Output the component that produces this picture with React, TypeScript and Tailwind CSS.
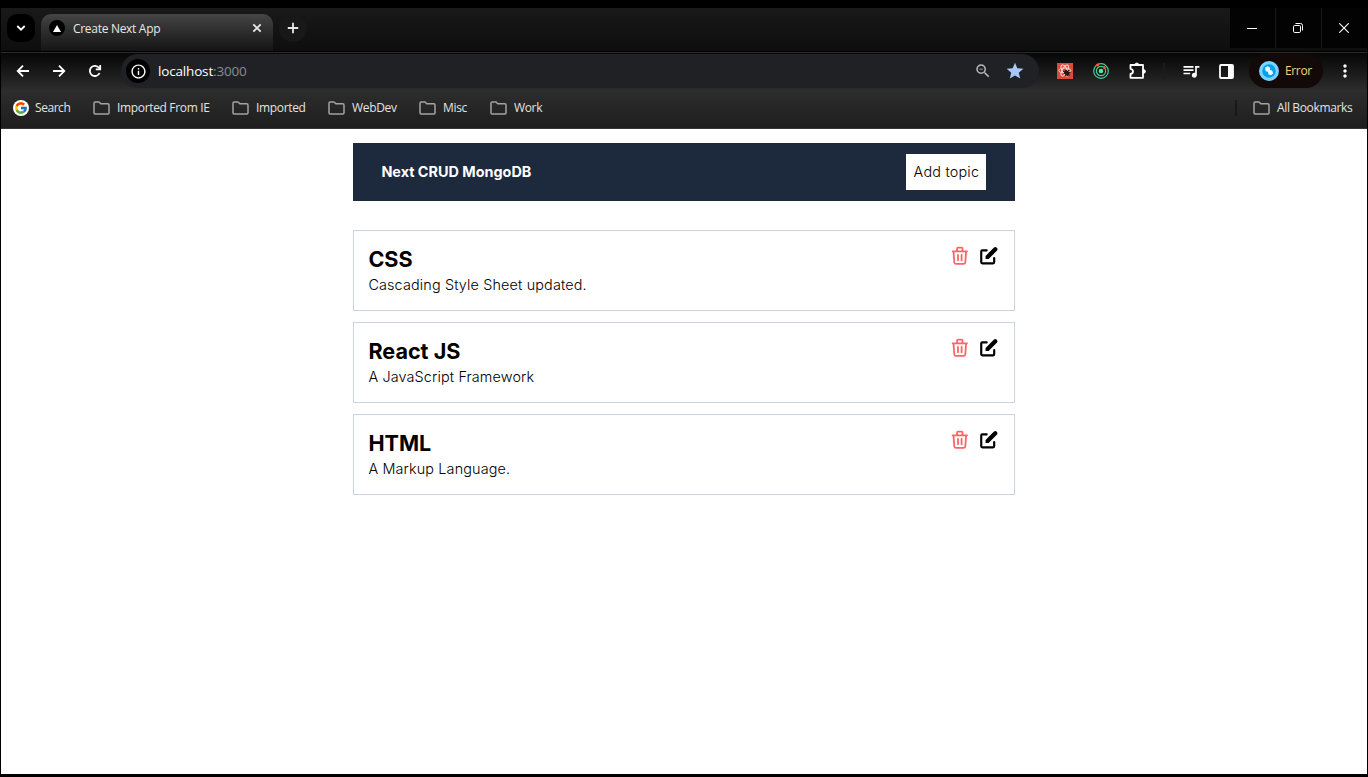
import React from "react";
import { HiPencilAlt, HiOutlineTrash } from "react-icons/hi";
import {
  MdOutlineInfo,
  MdStar,
  MdMoreVert,
  MdQueueMusic,
  MdZoomOut,
} from "react-icons/md";
import { FcGoogle } from "react-icons/fc";

const topics = [
  { title: "CSS", description: "Cascading Style Sheet updated." },
  { title: "React JS", description: "A JavaScript Framework" },
  { title: "HTML", description: "A Markup Language." },
];

const bookmarks = [
  { label: "Imported From IE", box: "ml-[22px] w-[117px]" },
  { label: "Imported", box: "ml-[22px] w-[74px]" },
  { label: "WebDev", box: "ml-[22px] w-[70px]" },
  { label: "Misc", box: "ml-[21px] w-[49px]" },
  { label: "Work", box: "ml-[22px] w-[53px]" },
];

function Folder() {
  return (
    <svg width="17" height="14" viewBox="0 0 17 14" fill="none" className="shrink-0">
      <path
        d="M1 2.2Q1 1 2.2 1H6L7.8 2.8H14.8Q16 2.8 16 4V11.8Q16 13 14.8 13H2.2Q1 13 1 11.8Z"
        stroke="#a3a3a3"
        strokeWidth="1.5"
      />
    </svg>
  );
}

function StrokeIcon({ d, className = "" }: { d: string; className?: string }) {
  return (
    <svg
      width="16"
      height="16"
      viewBox="0 0 16 16"
      fill="none"
      stroke="currentColor"
      strokeWidth="1.8"
      className={"shrink-0 " + className}
    >
      <path d={d} />
    </svg>
  );
}

function TabStrip() {
  return (
    <div className="flex h-[43px] shrink-0 bg-linear-to-b from-[#191919] to-[#0e0e0e]">
      <div className="ml-[6px] mt-[6px] flex size-7 items-center justify-center rounded-[10px] bg-black text-white">
        <StrokeIcon d="M4.3 6L8 9.7L11.7 6" />
      </div>
      <div className="ml-[6px] mt-[6px] flex h-[37px] w-[232px] items-start rounded-t-[10px] bg-linear-to-b from-[#454545] to-[#151515] pl-2 pr-2 pt-[6px]">
        <div className="flex size-4 items-center justify-center rounded-full bg-black">
          <svg width="8" height="7" viewBox="0 0 8 7">
            <path d="M4 0L8 7H0Z" fill="#fff" />
          </svg>
        </div>
        <span className="ml-2 mt-px whitespace-nowrap text-[12px] leading-4 tracking-[-0.3px] text-[#e8e8e8]">
          Create Next App
        </span>
        <StrokeIcon d="M4.3 4.3L11.7 11.7M11.7 4.3L4.3 11.7" className="ml-auto text-[#e8e8e8]" />
      </div>
      <div className="ml-[6px] mt-[6px] flex size-7 items-center justify-center rounded-full bg-[#181818] text-[#e8e8e8]">
        <StrokeIcon d="M8 2.8V13.2M2.8 8H13.2" />
      </div>
      <div className="ml-auto flex h-10 gap-px bg-[#191919] text-white">
        <div className="flex w-[45px] items-center justify-center bg-[#030303] pr-px">
          <div className="h-px w-[10px] bg-white" />
        </div>
        <div className="flex w-[45px] items-center justify-center bg-[#030303] pr-px">
          <svg width="10" height="10" viewBox="0 0 10 10" fill="none" stroke="#fff">
            <rect x=".5" y="2.5" width="7" height="7" rx="1.2" />
            <path d="M2.5 .5H7.5Q9.5 .5 9.5 2.5V7.5" />
          </svg>
        </div>
        <div className="flex w-[45px] items-center justify-center bg-[#030303] pr-px">
          <svg width="10" height="10" viewBox="0 0 10 10" stroke="#fff" strokeWidth="1.1">
            <path d="M.3 .3L9.7 9.7M9.7 .3L.3 9.7" />
          </svg>
        </div>
      </div>
    </div>
  );
}

function Toolbar() {
  return (
    <div className="flex h-[36px] items-center text-white">
      <StrokeIcon d="M14 8H3M8 2.7L2.7 8L8 13.3" className="ml-[14px]" />
      <StrokeIcon d="M2 8H13M8 2.7L13.3 8L8 13.3" className="ml-5" />
      <svg width="16" height="16" viewBox="0 0 16 16" fill="none" stroke="currentColor" strokeWidth="1.8" className="ml-5 shrink-0">
        <path d="M12.6 10A5.1 5.1 0 1 1 12 4.8L13 6" />
        <path d="M13.2 2V6.4H8.8" />
      </svg>
      <div className="ml-[18px] flex h-[34px] w-[918px] shrink-0 items-center rounded-full bg-[#202125] pl-[5px] pr-[14px]">
        <div className="flex size-6 items-center justify-center rounded-full bg-black">
          <MdOutlineInfo size={17} />
        </div>
        <div className="ml-2 text-[13.5px] tracking-[-0.17px] text-white">
          localhost<span className="text-[#8c8c8c]">:3000</span>
        </div>
        <MdZoomOut size={18} className="ml-auto text-[#b8b8b8]" />
        <MdStar size={20} className="ml-[13px] text-[#a8c7fa]" />
      </div>
      <svg width="16" height="16" viewBox="0 0 16 16" className="ml-[18px] shrink-0" fill="none">
        <rect width="16" height="16" fill="#dc4a3d" />
        <g stroke="#f6d8d3" strokeWidth="1">
          <ellipse cx="7.8" cy="7.5" rx="6" ry="2.5" />
          <ellipse cx="7.8" cy="7.5" rx="6" ry="2.5" transform="rotate(60 7.8 7.5)" />
          <ellipse cx="7.8" cy="7.5" rx="6" ry="2.5" transform="rotate(-60 7.8 7.5)" />
        </g>
        <ellipse cx="9.8" cy="10" rx="2.2" ry="3.2" fill="#231717" transform="rotate(-35 9.8 10)" />
        <path d="M6 8L12.5 12.5M12 7L8 13M6.5 10.5L13.5 9.5" stroke="#231717" />
      </svg>
      <svg width="16" height="16" viewBox="0 0 16 16" className="ml-5 shrink-0" fill="none" stroke="#50c99a">
        <circle cx="8" cy="8" r="7.3" strokeWidth="1.2" />
        <circle cx="8" cy="8" r="4.6" strokeWidth="1.2" />
        <circle cx="8" cy="8" r="2.3" fill="#55e6a5" stroke="none" />
        <circle cx="4.5" cy="2" r="1.6" fill="#f15b2a" stroke="none" />
        <circle cx="11.3" cy="4.4" r="1.5" fill="#f15b2a" stroke="none" />
      </svg>
      <svg width="18" height="18" viewBox="0 0 18 18" fill="none" className="ml-5 shrink-0" stroke="#fff" strokeWidth="1.8" strokeLinejoin="round">
        <path d="M1.5 3H14V15.8H1.5V12Q4 11.5 4 9.4T1.5 6.8Z" />
        <path d="M5.8 3Q5.8 1 7.8 1T9.8 3ZM14 7.4Q16.5 7.4 16.5 9.4T14 11.4Z" fill="#fff" strokeWidth=".8" />
      </svg>
      <div className="ml-4 h-4 w-[2px] shrink-0 bg-[#1c1c1c]" />
      <MdQueueMusic size={20} className="ml-4 shrink-0" />
      <svg width="15" height="15" viewBox="0 0 15 15" className="ml-[18px] shrink-0">
        <rect x="1" y="1" width="13" height="13" rx="1" fill="none" stroke="#fff" strokeWidth="1.8" />
        <path d="M9 1H14V14H9Z" fill="#fff" />
      </svg>
      <div className="ml-[15px] flex h-[34px] w-[74px] shrink-0 items-center rounded-full bg-[#120908] pl-[10px]">
        <svg width="20" height="20" viewBox="0 0 20 20" className="shrink-0">
          <circle cx="10" cy="10" r="10" fill="#7ad3ff" />
          <circle cx="10" cy="10" r="6.7" fill="#049ff0" />
          <path
            d="M6 6.4L8.8 5.2L11.2 6.8L11 9L13.2 9.4L14.2 12.4L12 14.2L9.3 13.2L9 11L6.6 10Z"
            fill="#e8f8ff"
          />
        </svg>
        <span className="ml-[6px] text-[12px] tracking-[-0.35px] text-[#f8d477]">Error</span>
      </div>
      <MdMoreVert size={20} className="ml-3 shrink-0" />
    </div>
  );
}

function Bookmarks() {
  return (
    <div className="flex h-[38px] items-center pb-px text-[12px] text-[#e3e3e3]">
      <div className="ml-3 flex w-[58px] items-center whitespace-nowrap">
        <div className="flex size-4 shrink-0 items-center justify-center rounded-full bg-white">
          <FcGoogle size={14} />
        </div>
        <span className="ml-[6px] tracking-[-0.45px]">Search</span>
      </div>
      {bookmarks.map((b) => (
        <div key={b.label} className={"flex items-center gap-[7px] whitespace-nowrap " + b.box}>
          <Folder />
          <span className="tracking-[-0.34px]">{b.label}</span>
        </div>
      ))}
      <div className="ml-auto h-4 w-[2px] bg-[#181818]" />
      <div className="ml-4 mr-[14px] flex w-[100px] items-center gap-[7px] whitespace-nowrap">
        <Folder />
        <span className="tracking-[-0.36px]">All Bookmarks</span>
      </div>
    </div>
  );
}

export default function App() {
  return (
    <div className="flex h-[777px] w-[1368px] flex-col overflow-hidden border-b-[3px] border-l border-r border-t-8 border-black bg-white font-['Open_Sans',sans-serif]">
      <TabStrip />
      <div className="h-[2px] shrink-0 border-b border-[#2b2b2b] bg-black" />
      <div className="h-[76px] shrink-0 border-b border-[#353333] bg-linear-to-b from-[#070707] via-[#2d2d2d] via-50% to-[#1e1e1e]">
        <Toolbar />
        <Bookmarks />
      </div>
      <main className="mx-auto mt-[14px] w-[662px] font-['Inter',sans-serif] text-black">
        <nav className="flex h-[58px] items-center justify-between bg-slate-800 pl-[28.4px] pr-[29px]">
          <a className="text-[14.4px] font-bold text-white">Next CRUD MongoDB</a>
          <a className="w-20 whitespace-nowrap bg-white py-[7px] pl-[7.6px] text-[14.4px] font-light leading-[22px] tracking-[0.2px]">
            Add topic
          </a>
        </nav>
        <div className="mt-[29px] flex flex-col gap-[11px]">
          {topics.map((t) => (
            <section key={t.title} className="flex h-[81px] items-start justify-between border border-slate-300 px-[14.4px] pt-[14px]">
              <div>
                <h2 className="text-[21.6px] font-bold leading-[28.8px]">{t.title}</h2>
                <div className="text-[14.4px] font-light leading-[21.6px] tracking-[0.14px]">{t.description}</div>
              </div>
              <div className="flex gap-[7.2px]">
                <HiOutlineTrash size={21.6} className="text-red-400" />
                <HiPencilAlt size={21.6} />
              </div>
            </section>
          ))}
        </div>
      </main>
    </div>
  );
}
